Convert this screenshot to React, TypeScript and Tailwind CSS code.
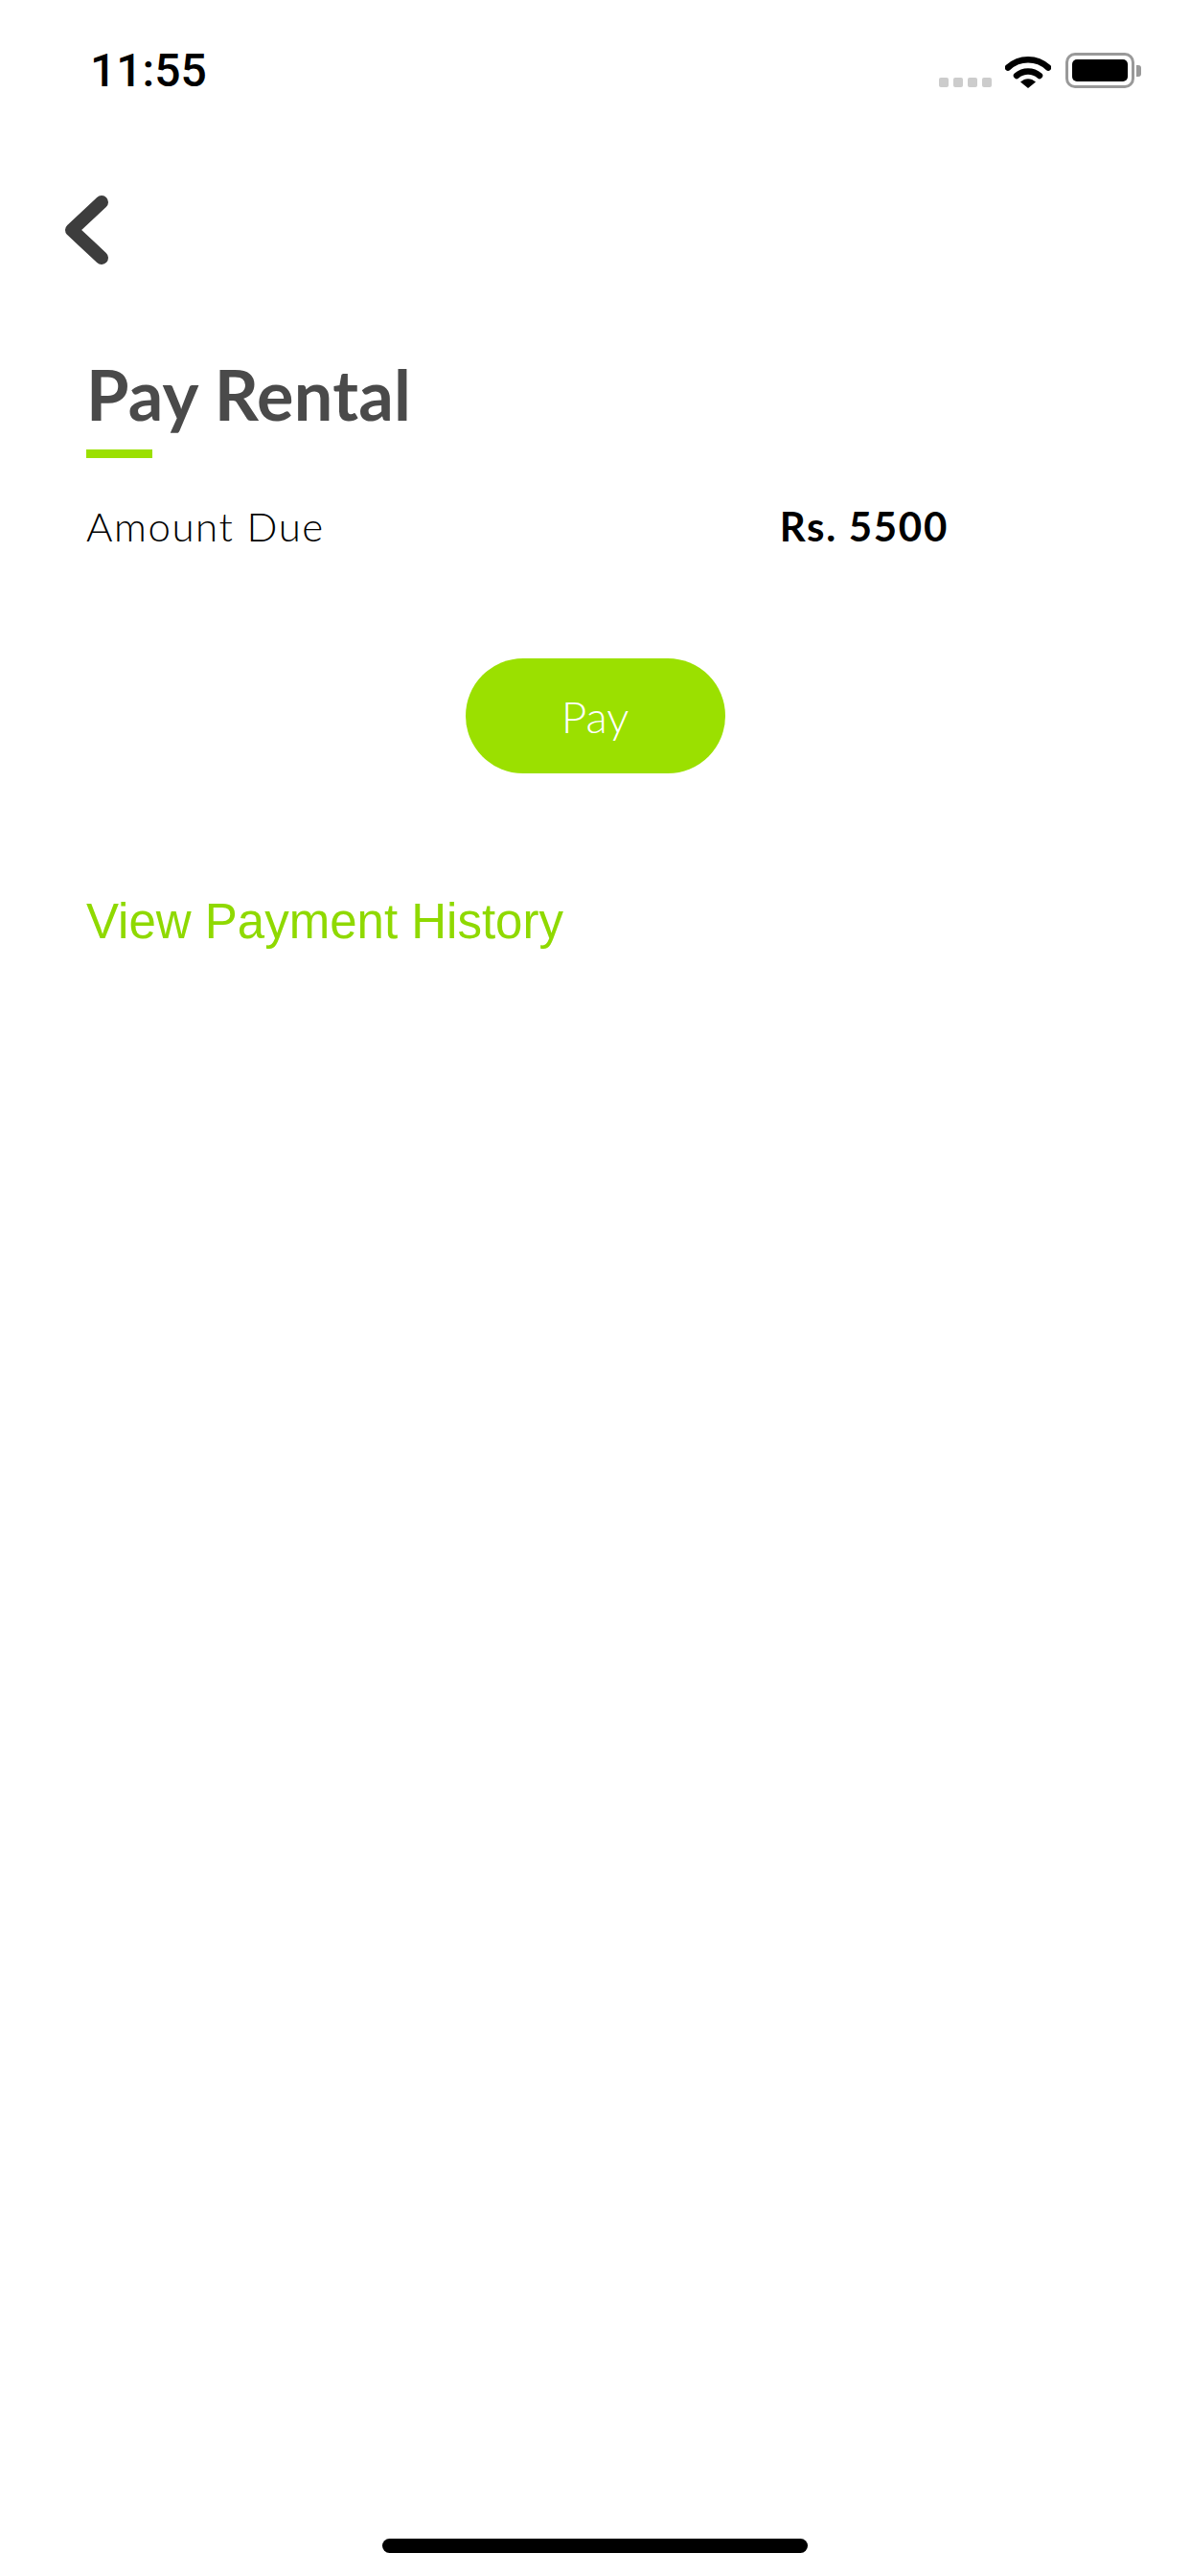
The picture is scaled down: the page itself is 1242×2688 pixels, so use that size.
export default function App() {
  return (
    <div className="flex h-[2688px] w-[1242px] flex-col bg-white overflow-hidden">
      {/* status bar */}
      <div className="flex h-[201px] items-start justify-between pt-[46px] pl-[94px] pr-[51px]">
        <span className="font-['Roboto',sans-serif] text-[48px] leading-[56px] font-medium text-black">11:55</span>
        <div className="flex items-start pt-[9px]">
          <div className="mt-[26px] flex gap-[5px]">
            <span className="h-[10px] w-[10px] rounded-[2px] bg-[#cccccc]" />
            <span className="h-[10px] w-[10px] rounded-[2px] bg-[#cccccc]" />
            <span className="h-[10px] w-[10px] rounded-[2px] bg-[#cccccc]" />
            <span className="h-[10px] w-[10px] rounded-[2px] bg-[#cccccc]" />
          </div>
          <svg className="ml-[14px] mt-[1px]" width="48" height="36" viewBox="0 0 48 36">
            <path d="M3 14.5C15 3.5 33 3.5 45 14.5" fill="none" stroke="#000" strokeWidth="6.5" strokeLinecap="round" />
            <path d="M12 23C19 17 29 17 36 23" fill="none" stroke="#000" strokeWidth="6.5" strokeLinecap="round" />
            <path d="M16 29.5C21 25 27 25 32 29.5L24 36Z" fill="#000" />
          </svg>
          <div className="ml-[15px] flex items-center">
            <div className="flex h-[37px] w-[72px] rounded-[10px] border-[3px] border-[#999999] p-[4px]">
              <div className="flex-1 rounded-[5px] bg-black" />
            </div>
            <span className="ml-[2px] h-[12px] w-[5px] rounded-r-[3px] bg-[#999999]" />
          </div>
        </div>
      </div>

      {/* back */}
      <div className="pl-[65px]">
        <svg className="block" width="50" height="78" viewBox="0 0 50 78">
          <path d="M41 10L10 39L41 68" fill="none" stroke="#3d3d3d" strokeWidth="14" strokeLinecap="round" strokeLinejoin="round" />
        </svg>
      </div>

      {/* content */}
      <div className="flex flex-col pl-[90px]">
        <h1 className="mt-[92px] font-['Lato',sans-serif] text-[72px] leading-[80px] font-bold tracking-[0.3px] text-[#4a4a4a]">Pay Rental</h1>
        <div className="mt-[18px] h-[9px] w-[69px] bg-[#9be000]" />
        <div className="mt-[46px] flex w-[900px] items-center justify-between font-['Lato',sans-serif] text-[42px] leading-[50px] text-black">
          <span className="font-light tracking-[1.6px]">Amount Due</span>
          <span className="font-bold tracking-[1.7px]">Rs. 5500</span>
        </div>
      </div>

      <div className="mt-[113px] flex justify-center">
        <button className="h-[120px] w-[271px] rounded-[60px] bg-[#9be000] font-['Lato',sans-serif] text-[46px] font-light text-white">Pay</button>
      </div>

      <a className="mt-[125px] pl-[90px] font-['Liberation_Sans',sans-serif] text-[51px] leading-[60px] text-[#8fd900]">View Payment History</a>

      {/* home indicator */}
      <div className="mt-auto mb-[24px] flex justify-center">
        <div className="h-[15px] w-[444px] rounded-full bg-black" />
      </div>
    </div>
  );
}
